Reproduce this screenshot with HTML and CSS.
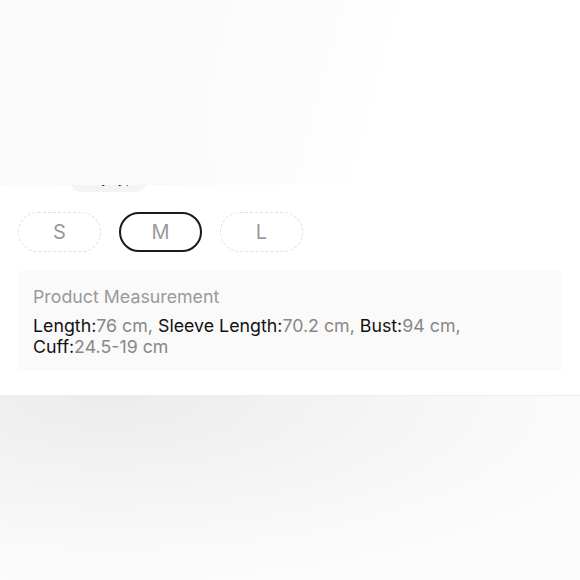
FILE: index.html
```html
<!DOCTYPE html>
<html lang="en">
<head>
<meta charset="utf-8">
<link rel="stylesheet" href="styles.css">
</head>
<body>
<div class="page">
  <div class="hero"></div>
  <div class="tags"><span class="tag">Body type</span></div>
  <div class="sizes">
    <button class="size">S</button>
    <button class="size active">M</button>
    <button class="size">L</button>
  </div>
  <div class="measure">
    <div class="measure-title">Product Measurement</div>
    <p class="measure-text"><b>Length:</b><span>76 cm, </span><b>Sleeve Length:</b><span>70.2 cm, </span><b>Bust:</b><span>94 cm, </span><b>Cuff:</b><span>24.5-19 cm</span></p>
  </div>
  <div class="shade"></div>
</div>
</body>
</html>
```
FILE: styles.css
```css
* { box-sizing: border-box; }
html, body { margin: 0; padding: 0; background: #fff; }
body { font-family: Inter, "Liberation Sans", Arial, sans-serif; width: 580px; height: 580px; overflow: hidden; }
.page { display: flex; flex-direction: column; height: 580px; }
.hero {
  height: 185px;
  flex: none;
  position: relative;
  z-index: 2;
  background:
    radial-gradient(ellipse 90px 130px at 145px 185px, rgba(248,248,248,0.5), rgba(255,255,255,0) 100%),
    linear-gradient(105deg, #fafafa 0%, #fbfbfb 35%, #fdfdfd 55%, #ffffff 65%);
}
.tags { margin-top: -14px; padding-left: 70px; height: 21px; flex: none; display: flex; }
.tag {
  display: inline-flex; align-items: flex-end; justify-content: center;
  width: 77px; height: 21px; border-radius: 0 0 12px 12px;
  background: #f4f4f4; color: #222; font-size: 14px; line-height: 16px; padding-bottom: 6px;
}
.sizes { display: flex; gap: 18px; padding-left: 18px; margin-top: 20px; flex: none; }
.size {
  width: 83px; height: 40px; border-radius: 20px;
  border: 1.5px dashed #e0e0e0; background: #fff;
  font-family: Inter, "Liberation Sans", Arial, sans-serif; font-size: 20px; color: #9a9a9a;
  display: flex; align-items: center; justify-content: center; padding: 0;
}
.size.active { border: 2px solid #1a1a1a; }
.measure {
  margin: 19px 18px 0; height: 100px; flex: none;
  background: #fafafa; padding: 15px 15px 13px;
}
.measure-title { font-size: 17.8px; line-height: 21px; color: #999; }
.measure-text { margin: 9px 0 0; font-size: 17.8px; line-height: 20.5px; color: #888; padding-right: 40px; }
.measure-text b { font-weight: normal; color: #111; }
.shade {
  margin-top: 24px; flex: 1;
  border-top: 1px solid #efefef;
  background: radial-gradient(ellipse 560px 200px at 110px 0px, #ececec 0%, #f4f4f4 45%, #fafafa 80%, #fcfcfc 100%);
}
```
